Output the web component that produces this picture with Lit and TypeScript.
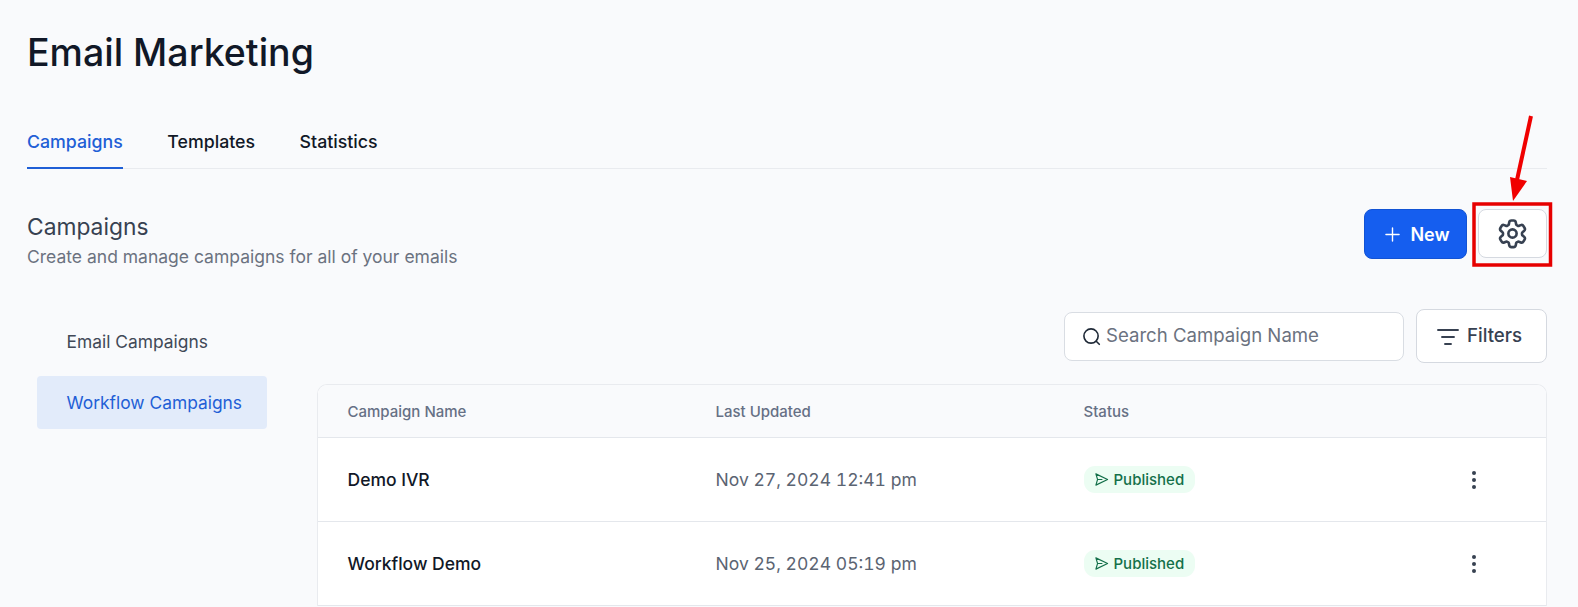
import { LitElement, html, css } from "lit";
import { customElement } from "lit/decorators.js";

const send = html`<svg class="send" viewBox="0 0 16 16" fill="none" stroke="currentColor" stroke-width="1.2" stroke-linejoin="round" stroke-linecap="round"><path d="M2 2 14.5 8 2 14 3.8 8ZM3.8 8H8.5"/></svg>`;
const dots = html`<svg class="dots" viewBox="0 0 6 20" fill="#374151"><circle cx="3" cy="3" r="2"/><circle cx="3" cy="10" r="2"/><circle cx="3" cy="17" r="2"/></svg>`;

@customElement("app-root")
export class AppRoot extends LitElement {
  static styles = css`
    :host { display: block; height: 607px; overflow: hidden; background: #f9fafc; font-family: Inter, "Liberation Sans", sans-serif; position: relative; }
    .page { padding: 29px 31px 0 27px; display: flex; flex-direction: column; }
    h1 { margin: 0; font-size: 37.5px; line-height: 48px; font-weight: 500; color: #111827; }
    .tabs { margin-top: 40px; height: 52px; display: flex; gap: 44.5px; border-bottom: 1px solid #e9ebef; box-sizing: border-box; }
    .tab { font-size: 17.75px; font-weight: 500; line-height: 24px; padding-top: 13px; color: #111827; box-sizing: border-box; height: 52px; }
    .tab.active { color: #1f5fd6; border-bottom: 2px solid #1f5fd6; }
    .head { margin-top: 40px; display: flex; justify-content: space-between; align-items: flex-start; }
    h2 { margin: 4px 0 0; font-size: 22.8px; line-height: 28px; font-weight: 400; color: #374151; }
    .sub { margin: 3px 0 0; font-size: 17.5px; line-height: 26px; color: #6b7280; }
    .actions { display: flex; gap: 11px; }
    .new { width: 103px; height: 50px; box-sizing: border-box; background: #155eef; border: 1px solid #1253d4; border-radius: 8px; color: #fff; font-size: 18px; font-weight: 600; display: flex; align-items: center; justify-content: center; gap: 10px; padding-left: 4px; }
    .new svg { width: 15px; height: 15px; }
    .gear { width: 69px; height: 49px; box-sizing: border-box; background: #fff; border: 1px solid #d5d9e0; border-radius: 8px; display: flex; align-items: center; justify-content: center; }
    .gear svg { width: 33px; height: 33px; }
    .body { display: flex; margin-top: 39px; }
    .side { width: 290px; flex: none; padding: 6px 0 0 10px; box-sizing: border-box; }
    .nav { width: 230px; height: 53px; box-sizing: border-box; padding-left: 29.5px; border-radius: 4px; display: flex; align-items: center; font-size: 17.4px; color: #414957; }
    .nav + .nav { margin-top: 8px; }
    .nav.active { background: #e2ebfa; color: #1f5fd6; }
    .main { flex: 1; min-width: 0; display: flex; flex-direction: column; }
    .tools { display: flex; justify-content: flex-end; align-items: center; gap: 12px; height: 54px; }
    .search { width: 340px; height: 49px; box-sizing: border-box; background: #fff; border: 1px solid #d9dde3; border-radius: 8px; display: flex; align-items: center; gap: 5px; padding: 0 0 2px 17px; font-size: 18.6px; color: #6b7280; }
    .search svg { width: 19px; height: 19px; margin-top: 3px; }
    .filters { width: 131px; height: 54px; box-sizing: border-box; background: #fff; border: 1px solid #d5d9e0; border-radius: 8px; display: flex; align-items: center; justify-content: center; gap: 8px; font-size: 18.7px; font-weight: 500; color: #374151; padding: 0 4px 2px 0; }
    .filters svg { width: 22px; height: 18px; margin-top: 4px; }
    .table { margin-top: 21px; border: 1px solid #e9ebef; border-bottom: 0; border-radius: 10px 10px 0 0; background: #fff; overflow: hidden; }
    .row { display: grid; grid-template-columns: 368px 368px 1fr 74px; align-items: center; padding-left: 29.5px; height: 84px; box-sizing: border-box; border-bottom: 1px solid #e4e7ec; }
    .row.th { height: 53px; background: #f9fafc; font-size: 15px; font-weight: 500; color: #667085; }
    .name { font-size: 17.5px; font-weight: 460; color: #111827; }
    .date { font-size: 17.55px; color: #5b6472; font-variant-numeric: tabular-nums; }
    .badge { display: inline-flex; align-items: center; gap: 5px; height: 27px; width: 111px; box-sizing: border-box; padding-left: 10px; border-radius: 11px; background: #ecfdf3; color: #14704a; font-size: 15px; font-weight: 460; }
    .send { width: 15px; height: 15px; flex: none; }
    .dots { width: 6px; height: 20px; display: block; margin-left: -1px; }
    .overlay { position: absolute; left: 0; top: 0; pointer-events: none; }
  `;

  row(name: string, date: string) {
    return html`<div class="row">
      <div class="name">${name}</div>
      <div class="date">${date}</div>
      <div><span class="badge">${send}Published</span></div>
      <div>${dots}</div>
    </div>`;
  }

  render() {
    return html`<div class="page">
      <h1>Email Marketing</h1>
      <div class="tabs">
        <div class="tab active">Campaigns</div>
        <div class="tab">Templates</div>
        <div class="tab">Statistics</div>
      </div>
      <div class="head">
        <div>
          <h2>Campaigns</h2>
          <p class="sub">Create and manage campaigns for all of your emails</p>
        </div>
        <div class="actions">
          <div class="new">
            <svg viewBox="0 0 16 16" stroke="#fff" stroke-width="1.5" stroke-linecap="round"><path d="M8 1v14M1 8h14"/></svg>New
          </div>
          <div class="gear">
            <svg viewBox="0 0 24 24" fill="none" stroke="#374151" stroke-width="1.9" stroke-linecap="round" stroke-linejoin="round"><path d="M9.6 3.9c.1-.8.8-1.4 1.6-1.4h1.6c.8 0 1.5.6 1.6 1.4l.2 1.3c.1.4.3.7.7.9l.4.2c.3.2.7.3 1.1.1l1.2-.5c.8-.3 1.6 0 2 .7l.8 1.4c.4.7.2 1.6-.4 2.1l-1 .8c-.3.2-.5.6-.5 1v.6c0 .4.2.8.5 1l1 .8c.6.5.8 1.4.4 2.1l-.8 1.4c-.4.7-1.2 1-2 .7l-1.2-.5c-.4-.2-.8-.1-1.1.1l-.4.2c-.4.2-.6.5-.7.9l-.2 1.3c-.1.8-.8 1.4-1.6 1.4h-1.6c-.8 0-1.5-.6-1.6-1.4l-.2-1.3c-.1-.4-.3-.7-.7-.9l-.4-.2c-.3-.2-.7-.3-1.1-.1l-1.2.5c-.8.3-1.6 0-2-.7l-.8-1.4c-.4-.7-.2-1.6.4-2.1l1-.8c.3-.2.5-.6.5-1v-.6c0-.4-.2-.8-.5-1l-1-.8c-.6-.5-.8-1.4-.4-2.1l.8-1.4c.4-.7 1.2-1 2-.7l1.2.5c.4.2.8.1 1.1-.1l.4-.2c.4-.2.6-.5.7-.9z"/><circle cx="12" cy="12" r="3"/></svg>
          </div>
        </div>
      </div>
      <div class="body">
        <div class="side">
          <div class="nav">Email Campaigns</div>
          <div class="nav active">Workflow Campaigns</div>
        </div>
        <div class="main">
          <div class="tools">
            <div class="search">
              <svg viewBox="0 0 20 20" fill="none" stroke="#1f2937" stroke-width="1.7" stroke-linecap="round"><circle cx="9.5" cy="9.5" r="7.5"/><path d="M15 15l3.2 3.2"/></svg>
              Search Campaign Name
            </div>
            <div class="filters">
              <svg viewBox="0 0 22 18" fill="none" stroke="#374151" stroke-width="1.9" stroke-linecap="round"><path d="M1 2h20M5 9h12M8 16h6"/></svg>
              Filters
            </div>
          </div>
          <div class="table">
            <div class="row th"><div>Campaign Name</div><div>Last Updated</div><div>Status</div><div></div></div>
            ${this.row("Demo IVR", "Nov 27, 2024 12:41 pm")}
            ${this.row("Workflow Demo", "Nov 25, 2024 05:19 pm")}
          </div>
        </div>
      </div>
      <svg class="overlay" width="1578" height="607" fill="none">
        <rect x="1474" y="204" width="76.5" height="61" stroke="#e60000" stroke-width="3.5"/>
        <path d="M1531 116 1517 180" stroke="#f00000" stroke-width="4"/>
        <path d="M1510 177 1527 181 1513 201Z" fill="#f00000"/>
      </svg>
    </div>`;
  }
}
